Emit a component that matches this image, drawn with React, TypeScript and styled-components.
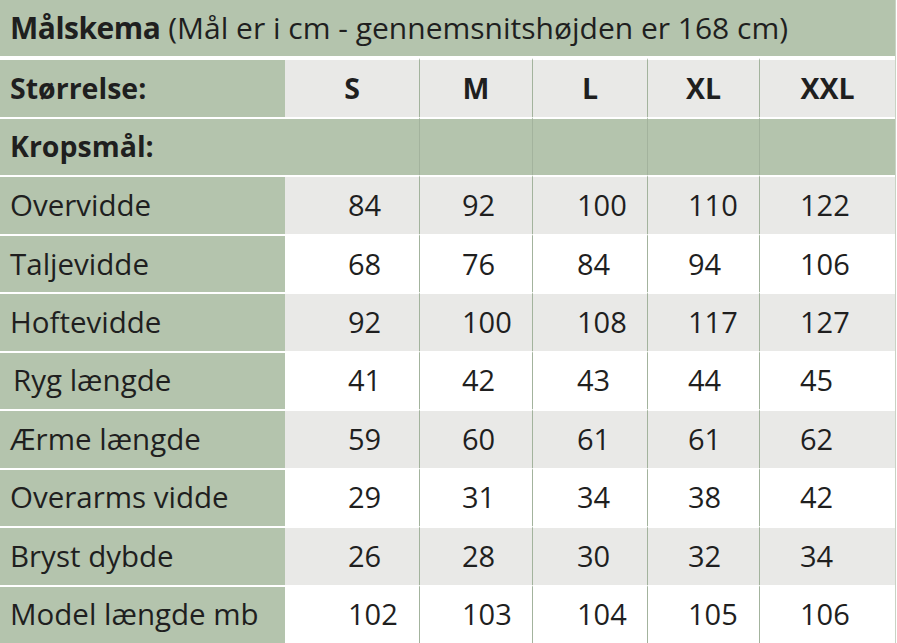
import React from "react";
import styled, { createGlobalStyle } from "styled-components";

const Global = createGlobalStyle`
  html, body { margin: 0; padding: 0; background: #ffffff; }
  body { font-family: "Open Sans", "Liberation Sans", sans-serif; color: #1f1f1f; }
`;

const GREEN = "#b4c4ad";
const GRAY = "#e9e9e7";
const LINE = "#a3b39d";

const Table = styled.div`
  width: 895px;
  height: 643px;
  display: grid;
  grid-template-columns: 285px 134px 113px 115px 112px 136px;
  grid-template-rows: repeat(11, 1fr);
  border-right: 1px solid #c9d2c4;
`;

const Title = styled.div`
  grid-column: 1 / -1;
  background: ${GREEN};
  display: flex;
  align-items: center;
  padding-left: 10px;
  padding-bottom: 1px;
  font-size: 30px;
  white-space: nowrap;
  border-bottom: 2px solid #ffffff;
  b { font-weight: 700; letter-spacing: -0.5px; }
`;

const Label = styled.div<{ $bold?: boolean; $indent?: number }>`
  background: ${GREEN};
  display: flex;
  align-items: center;
  padding-left: ${(p) => p.$indent ?? 10}px;
  padding-bottom: 2px;
  font-size: ${(p) => (p.$bold ? 28.5 : 29.5)}px;
  font-weight: ${(p) => (p.$bold ? 700 : 400)};
  white-space: nowrap;
  border-top: 2px solid #ffffff;
`;

const Cell = styled.div<{ $bg: string; $line: boolean; $pad: number; $center?: boolean; $bold?: boolean }>`
  background: ${(p) => p.$bg};
  display: flex;
  align-items: center;
  justify-content: ${(p) => (p.$center ? "center" : "flex-start")};
  padding-left: ${(p) => (p.$center ? 0 : p.$pad)}px;
  padding-bottom: 2px;
  font-size: ${(p) => (p.$bold ? 28.5 : 29)}px;
  font-weight: ${(p) => (p.$bold ? 700 : 400)};
  border-top: 2px solid #ffffff;
  border-left: ${(p) => (p.$line ? `1px solid ${LINE}` : "none")};
`;

const sizes = ["S", "M", "L", "XL", "XXL"];
const pads = [63, 42, 44, 40, 40];

const rows: { label: string; values: number[]; indent?: number }[] = [
  { label: "Overvidde", values: [84, 92, 100, 110, 122] },
  { label: "Taljevidde", values: [68, 76, 84, 94, 106] },
  { label: "Hoftevidde", values: [92, 100, 108, 117, 127] },
  { label: "Ryg længde", values: [41, 42, 43, 44, 45], indent: 13 },
  { label: "Ærme længde", values: [59, 60, 61, 61, 62] },
  { label: "Overarms vidde", values: [29, 31, 34, 38, 42] },
  { label: "Bryst dybde", values: [26, 28, 30, 32, 34] },
  { label: "Model længde mb", values: [102, 103, 104, 105, 106] },
];

export default function App() {
  return (
    <>
      <Global />
      <Table>
        <Title>
          <b>Målskema</b>&nbsp;(Mål er i cm - gennemsnitshøjden er 168 cm)
        </Title>
        <Label $bold>Størrelse:</Label>
        {sizes.map((s, i) => (
          <Cell key={s} $bg={GRAY} $line={i > 0} $pad={0} $center $bold>
            {s}
          </Cell>
        ))}
        <Label $bold>Kropsmål:</Label>
        {sizes.map((s, i) => (
          <Cell key={"k" + s} $bg={GREEN} $line={i > 0} $pad={0} />
        ))}
        {rows.map((r, ri) => (
          <React.Fragment key={r.label}>
            <Label $indent={r.indent}>{r.label}</Label>
            {r.values.map((v, i) => (
              <Cell key={i} $bg={ri % 2 === 0 ? GRAY : "#ffffff"} $line={i > 0} $pad={pads[i]}>
                {v}
              </Cell>
            ))}
          </React.Fragment>
        ))}
      </Table>
    </>
  );
}
